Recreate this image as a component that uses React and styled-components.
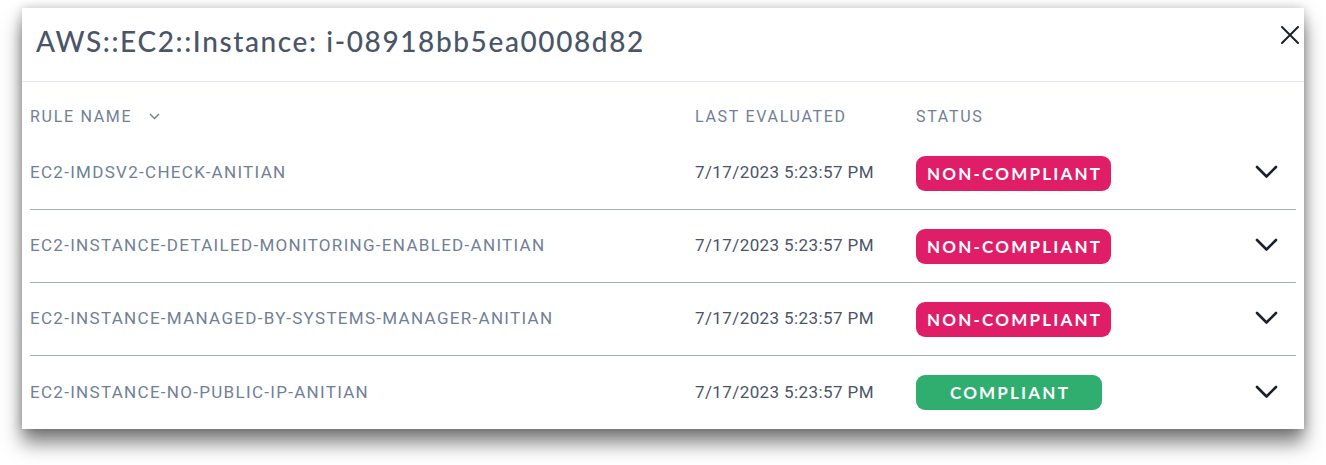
import React from 'react';
import styled, { createGlobalStyle } from 'styled-components';

const GlobalStyle = createGlobalStyle`
  html, body {
    margin: 0;
    padding: 0;
    background: #ffffff;
  }
  body {
    font-family: Roboto, "Liberation Sans", sans-serif;
  }
`;

const rules = [
  { name: 'EC2-IMDSV2-CHECK-ANITIAN', date: '7/17/2023 5:23:57 PM', compliant: false },
  { name: 'EC2-INSTANCE-DETAILED-MONITORING-ENABLED-ANITIAN', date: '7/17/2023 5:23:57 PM', compliant: false },
  { name: 'EC2-INSTANCE-MANAGED-BY-SYSTEMS-MANAGER-ANITIAN', date: '7/17/2023 5:23:57 PM', compliant: false },
  { name: 'EC2-INSTANCE-NO-PUBLIC-IP-ANITIAN', date: '7/17/2023 5:23:57 PM', compliant: true },
];

const App = () => {
  return (
    <>
      <GlobalStyle />
      <Page>
        <Dialog>
          <Header>
            <Title>AWS::EC2::Instance: i-08918bb5ea0008d82</Title>
            <CloseButton aria-label="close">
              <svg width="18" height="18" viewBox="0 0 18 18">
                <path d="M1 1 L17 17 M17 1 L1 17" stroke="#1a202c" strokeWidth="2" strokeLinecap="round" />
              </svg>
            </CloseButton>
          </Header>

          <Table>
            <HeadRow>
              <HeadCell>
                RULE NAME
                <SortIcon width="11" height="7" viewBox="0 0 11 7">
                  <polyline points="1,1 5.5,5.5 10,1" fill="none" stroke="#718096" strokeWidth="1.4" />
                </SortIcon>
              </HeadCell>
              <HeadCell>LAST EVALUATED</HeadCell>
              <HeadCell>STATUS</HeadCell>
              <HeadCell />
            </HeadRow>

            {rules.map((r) => (
              <Row key={r.name}>
                <RuleName>{r.name}</RuleName>
                <DateCell>{r.date}</DateCell>
                <div>
                  <Badge $compliant={r.compliant}>
                    {r.compliant ? 'COMPLIANT' : 'NON-COMPLIANT'}
                  </Badge>
                </div>
                <Expand>
                  <svg width="23" height="14" viewBox="0 0 23 14">
                    <polyline points="2,2 11.5,11.5 21,2" fill="none" stroke="#1a202c" strokeWidth="2.6" strokeLinecap="round" strokeLinejoin="round" />
                  </svg>
                </Expand>
              </Row>
            ))}
          </Table>
        </Dialog>
      </Page>
    </>
  );
};

const Page = styled.div`
  padding: 8px 22px 40px 22px;
`;

const Dialog = styled.div`
  background: #ffffff;
  box-shadow: 0 14px 18px rgba(0, 0, 0, 0.5), 0 0 10px rgba(0, 0, 0, 0.22);
`;

const Header = styled.div`
  display: flex;
  align-items: center;
  justify-content: space-between;
  height: 73px;
  padding: 0 5px 0 14px;
  border-bottom: 1px solid #e2e8f0;
`;

const Title = styled.h2`
  margin: 0 0 8px 0;
  font-family: Lato, "Open Sans", sans-serif;
  font-weight: 500;
  font-size: 28px;
  color: #4a5568;
  letter-spacing: 1.6px;
`;

const CloseButton = styled.button`
  background: none;
  border: none;
  padding: 0;
  margin: 0 0 20px 0;
  display: flex;
  align-items: center;
  justify-content: center;
  cursor: pointer;
`;

const Table = styled.div`
  padding: 0 8px;
`;

const gridCols = `665px 221px 1fr 60px`;

const HeadRow = styled.div`
  display: grid;
  grid-template-columns: ${gridCols};
  align-items: center;
  height: 55px;
  box-sizing: border-box;
  padding-bottom: 11px;
  align-content: end;
`;

const HeadCell = styled.div`
  display: flex;
  align-items: center;
  font-size: 16px;
  font-weight: 400;
  color: #718096;
  letter-spacing: 1.7px;
`;

const SortIcon = styled.svg`
  margin-left: 17px;
`;

const Row = styled.div`
  display: grid;
  grid-template-columns: ${gridCols};
  align-items: center;
  height: 73px;
  box-sizing: border-box;
  border-bottom: 1px solid #a0aec0;

  &:last-child {
    border-bottom: none;
  }
`;

const RuleName = styled.div`
  font-size: 17px;
  color: #718096;
  letter-spacing: 1.3px;
  margin-top: -2px;
`;

const DateCell = styled.div`
  font-size: 17px;
  color: #4a5568;
  letter-spacing: 0.4px;
  margin-top: -2px;
`;

const Badge = styled.span`
  display: inline-flex;
  align-items: center;
  justify-content: center;
  box-sizing: border-box;
  height: 35px;
  min-width: ${(p) => (p.$compliant ? '186px' : '0')};
  padding: 0 9px 0 11px;
  border-radius: 9px;
  background: ${(p) => (p.$compliant ? '#2fae6f' : '#e01e68')};
  color: #ffffff;
  font-family: Lato, "Open Sans", sans-serif;
  font-size: 17px;
  font-weight: 700;
  letter-spacing: 2.2px;
`;

const Expand = styled.div`
  display: flex;
  justify-content: flex-end;
  padding-right: 18px;
  margin-top: -2px;
`;

export default App;
